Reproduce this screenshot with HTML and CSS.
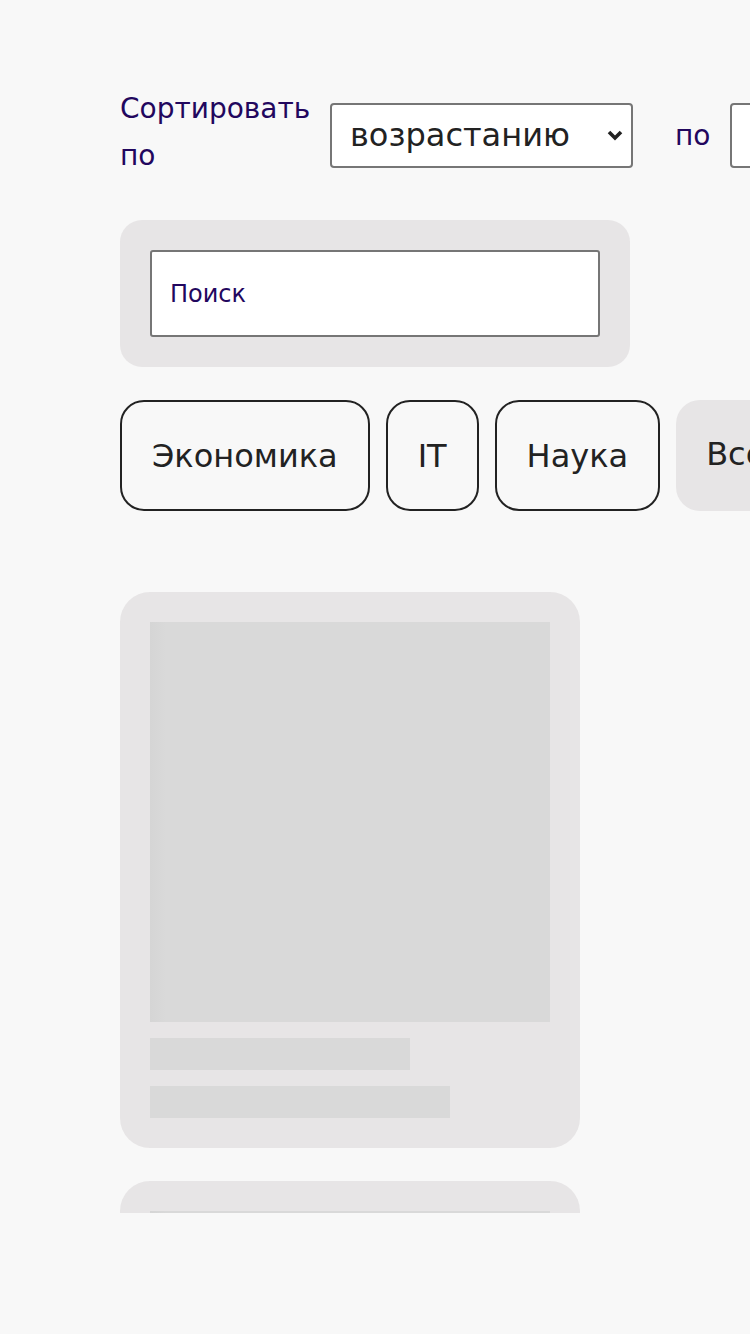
FILE: index.html
```html
<!DOCTYPE html>
<html lang="ru">
<head>
<meta charset="utf-8">
<title>Каталог</title>
<link rel="stylesheet" href="styles.css">
</head>
<body>
<main class="page">
  <div class="sort-row">
    <label class="sort-label" for="order">Сортировать по</label>
    <select id="order" class="sort-select">
      <option>возрастанию</option>
      <option>убыванию</option>
    </select>
    <span class="sort-by">по</span>
    <select class="sort-select">
      <option>названию</option>
      <option>дате</option>
    </select>
  </div>

  <div class="search-box">
    <input class="search-input" type="text" placeholder="Поиск">
  </div>

  <div class="chips">
    <button class="chip">Экономика</button>
    <button class="chip">IT</button>
    <button class="chip">Наука</button>
    <button class="chip chip-active">Все</button>
  </div>

  <div class="cards">
    <div class="card">
      <div class="card-image"></div>
      <div class="bar bar-short"></div>
      <div class="bar bar-long"></div>
    </div>
    <div class="card">
      <div class="card-image"></div>
      <div class="bar bar-short"></div>
      <div class="bar bar-long"></div>
    </div>
  </div>
</main>
</body>
</html>
```

FILE: styles.css
```css
html, body {
  margin: 0;
  padding: 0;
  background: #f8f8f8;
  overflow: hidden;
}

body {
  font-family: "DejaVu Sans", sans-serif;
  color: #222;
}

.page {
  height: 1213px;
  overflow: hidden;
  padding: 90px 0 0 120px;
  box-sizing: border-box;
  width: 1200px;
}

.sort-row {
  display: flex;
  align-items: center;
  height: 90px;
}

.sort-label {
  width: 200px;
  margin-bottom: 6px;
  font-size: 28px;
  line-height: 47px;
  color: #22075e;
  flex-shrink: 0;
}

.sort-select {
  appearance: none;
  -webkit-appearance: none;
  font-family: "DejaVu Sans", sans-serif;
  font-size: 32px;
  height: 65px;
  width: 303px;
  margin-left: 10px;
  padding: 0 40px 0 18px;
  color: #222;
  background-color: #fff;
  background-image: url("data:image/svg+xml,%3Csvg xmlns='http://www.w3.org/2000/svg' width='16' height='12' viewBox='0 0 16 12'%3E%3Cpath d='M2 3 L8 9 L14 3' fill='none' stroke='%23222' stroke-width='3.6'/%3E%3C/svg%3E");
  background-repeat: no-repeat;
  background-position: right 8px center;
  background-size: 16px 12px;
  border: 2px solid #767676;
  border-radius: 4px;
  flex-shrink: 0;
}

.sort-by {
  margin-left: 42px;
  margin-right: 10px;
  font-size: 28px;
  color: #22075e;
  flex-shrink: 0;
}

.search-box {
  margin-top: 40px;
  width: 510px;
  box-sizing: border-box;
  padding: 30px;
  background: #e7e5e6;
  border-radius: 22px;
}

.search-input {
  display: block;
  width: 100%;
  height: 87px;
  box-sizing: border-box;
  padding: 0 18px;
  font-family: "DejaVu Sans", sans-serif;
  font-size: 24px;
  color: #22075e;
  background: #fff;
  border: 2px solid #767676;
  border-radius: 3px;
}

.search-input::placeholder {
  color: #22075e;
  opacity: 1;
}

.chips {
  display: flex;
  gap: 16px;
  margin-top: 33px;
}

.chip {
  flex-shrink: 0;
  height: 111px;
  padding: 0 30px;
  font-family: "DejaVu Sans", sans-serif;
  font-size: 32px;
  color: #222;
  background: transparent;
  border: 2px solid #222;
  border-radius: 24px;
}

.chip-active {
  background: #e7e5e6;
  border: none;
  padding-bottom: 4px;
}

.cards {
  display: flex;
  flex-direction: column;
  gap: 33px;
  margin-top: 81px;
}

.card {
  width: 460px;
  box-sizing: border-box;
  padding: 30px;
  background: #e7e5e6;
  border-radius: 30px;
  display: flex;
  flex-direction: column;
  gap: 16px;
}

.card-image {
  width: 400px;
  height: 400px;
  background: linear-gradient(90deg, #d5d5d5 0px, #d9d9d9 16px, #d9d9d9 100%);
}

.bar {
  height: 32px;
  background: #d9d9d9;
}

.bar-short { width: 260px; }
.bar-long { width: 300px; }
```
